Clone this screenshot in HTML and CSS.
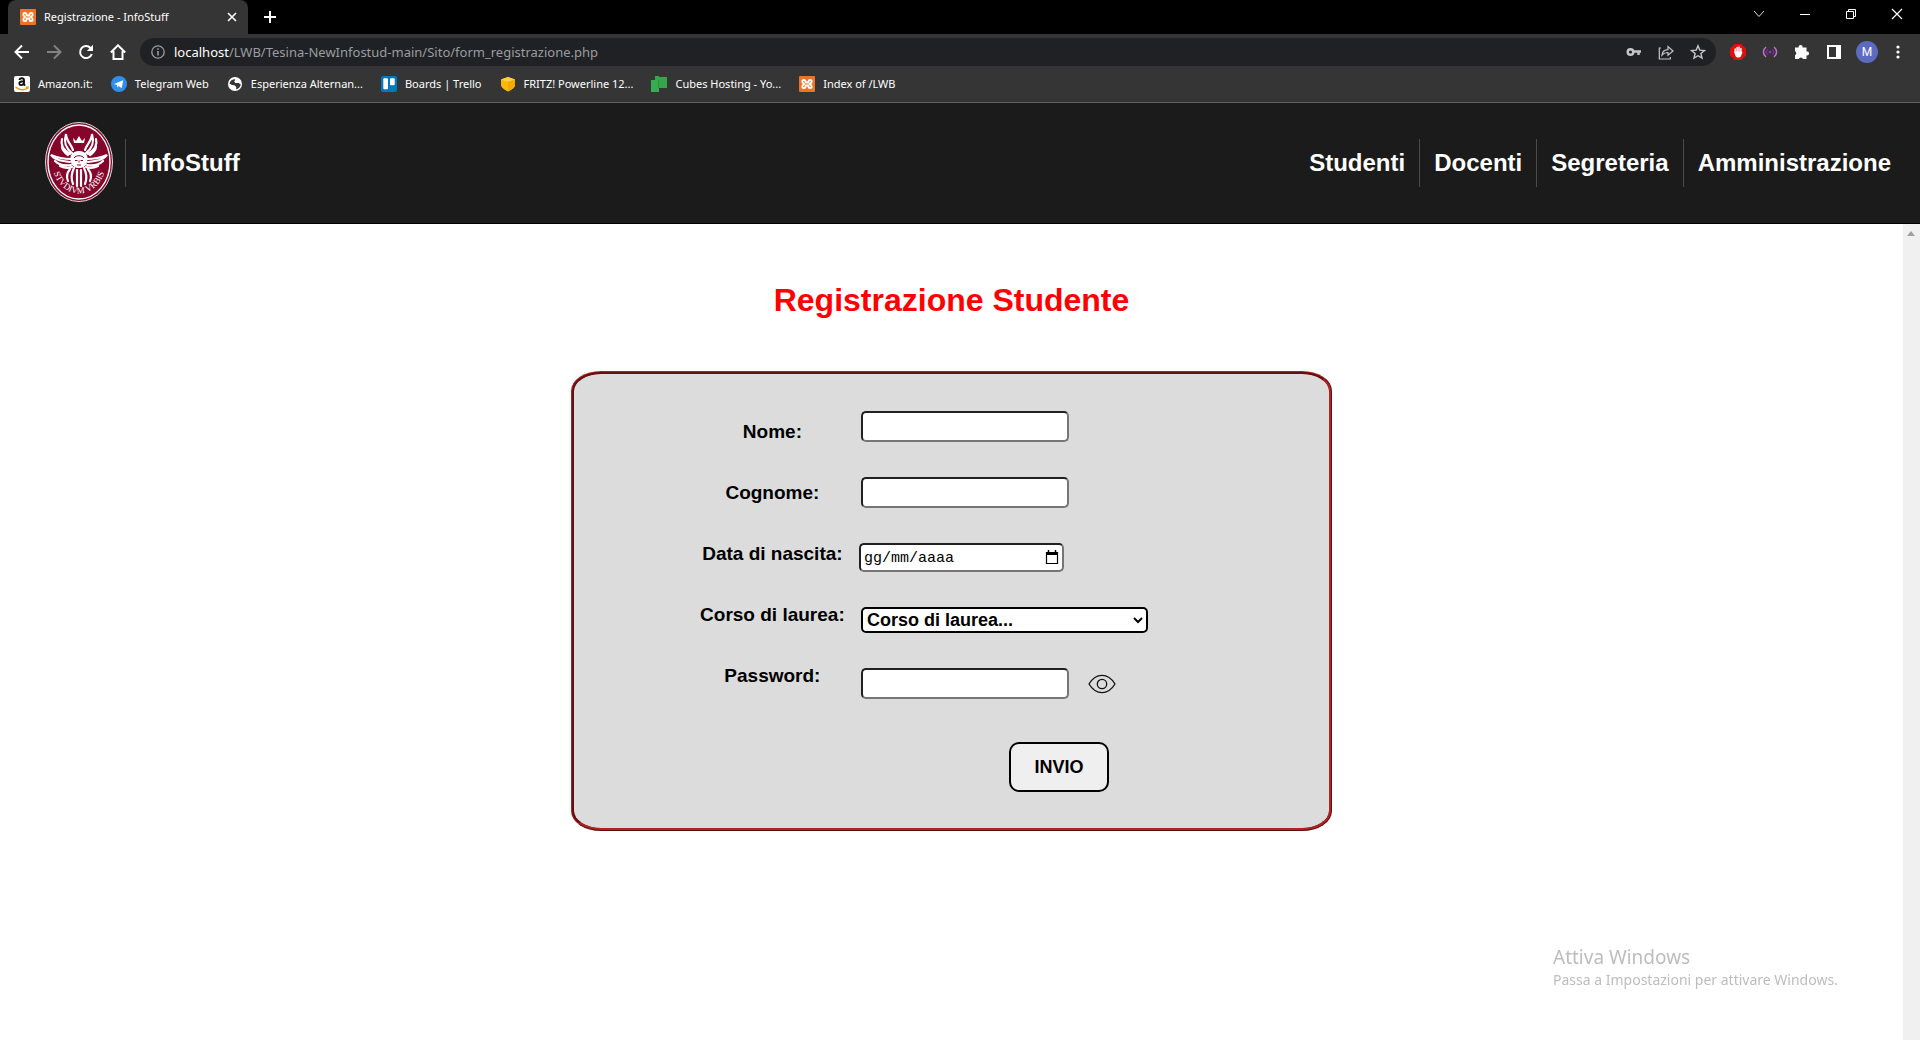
FILE: index.html
```html
<!DOCTYPE html>
<html lang="it">
<head>
<meta charset="utf-8">
<title>Registrazione - InfoStuff</title>
<link rel="stylesheet" href="styles.css">
</head>
<body>
<svg class="defs" aria-hidden="true">
  <symbol id="xampp" viewBox="0 0 16 16">
    <rect width="16" height="16" rx="1" fill="#ee7326"/>
    <path d="M6.500 7V5.500A1.600 1.600 0 0 0 3.300 5.500C3.300 7 4.500 7.300 5 8 4.500 8.700 3.300 9 3.300 10.500A1.600 1.600 0 0 0 6.500 10.500V9.500H9.500V10.500A1.600 1.600 0 0 0 12.700 10.500C12.700 9 11.500 8.700 11 8 11.500 7.300 12.700 7 12.700 5.500A1.600 1.600 0 0 0 9.500 5.500V6.500H6.500" fill="none" stroke="#fff" stroke-width="1.800"/>
  </symbol>
</svg>

<div class="browser">
  <div class="tabstrip">
    <div class="tab">
      <svg class="icon16"><use href="#xampp"/></svg>
      <span class="tab-title">Registrazione - InfoStuff</span>
      <button class="bare" aria-label="Chiudi scheda"><svg width="10" height="10" viewBox="0 0 10 10" stroke="#fff" stroke-width="1.600"><path d="M1 1l8 8M9 1L1 9"/></svg></button>
    </div>
    <button class="bare new-tab" aria-label="Nuova scheda"><svg width="12" height="12" viewBox="0 0 12 12" stroke="#fff" stroke-width="2"><path d="M6 0v12M0 6h12"/></svg></button>
    <div class="window-controls">
      <button class="bare" aria-label="Cerca schede"><svg width="12" height="12" viewBox="0 0 12 12" fill="none" stroke="#ddd"><path d="M1 3l5 5.500L11 3"/></svg></button>
      <button class="bare" aria-label="Riduci"><svg width="12" height="12" viewBox="0 0 12 12" stroke="#fff"><path d="M1 6.500h10"/></svg></button>
      <button class="bare" aria-label="Ripristina"><svg width="12" height="12" viewBox="0 0 12 12" fill="none" stroke="#fff"><path d="M1.500 3.500h7v7h-7zM3.500 3.500v-2h7v7h-2"/></svg></button>
      <button class="bare" aria-label="Chiudi"><svg width="12" height="12" viewBox="0 0 12 12" stroke="#fff" stroke-width="1.200"><path d="M1 1l10 10M11 1L1 11"/></svg></button>
    </div>
  </div>

  <div class="toolbar">
    <button class="bare" aria-label="Indietro"><svg width="16" height="16" viewBox="0 0 16 16" fill="none" stroke="#fff" stroke-width="2"><path d="M15 8H2M8 1.500L1.500 8 8 14.500"/></svg></button>
    <button class="bare" aria-label="Avanti"><svg width="16" height="16" viewBox="0 0 16 16" fill="none" stroke="#828282" stroke-width="2"><path d="M1 8h13M8 1.500L14.500 8 8 14.500"/></svg></button>
    <button class="bare" aria-label="Ricarica"><svg width="16" height="16" viewBox="0 0 16 16" fill="none" stroke="#fff" stroke-width="2"><path d="M13.800 10A6 6 0 1 1 12.500 4"/><path d="M15 .8V7H8.800z" fill="#fff" stroke="none"/></svg></button>
    <button class="bare" aria-label="Pagina iniziale"><svg width="16" height="16" viewBox="0 0 16 16" fill="none" stroke="#fff" stroke-width="2"><path d="M.8 8.500L8 1.300l7.200 7.200M3.500 7v8h9V7"/></svg></button>
    <div class="omnibox">
      <svg width="14" height="14" viewBox="0 0 14 14" fill="none" stroke="#9a9da1" stroke-width="1.300"><circle cx="7" cy="7" r="6.200"/><path d="M7 6v4.500M7 3.300v1.500" stroke-width="1.600"/></svg>
      <span class="url"><b>localhost</b>/LWB/Tesina-NewInfostud-main/Sito/form_registrazione.php</span>
      <button class="bare" aria-label="Password"><svg width="16" height="16" viewBox="0 0 16 16" fill="none" stroke="#c4c6c9" stroke-width="2.400"><circle cx="4.500" cy="8" r="2.800"/><path d="M7.500 7.500H15M12.500 7.500V11"/></svg></button>
      <button class="bare" aria-label="Condividi"><svg width="16" height="16" viewBox="0 0 16 16" fill="none" stroke="#c4c6c9" stroke-width="1.200"><path d="M3 4H1.300v11h11v-2M4 11c.5-3.500 3-5.200 6-5.300V2.500L15 7l-5 4.300V8.500C7.500 8.500 5.500 9.200 4 11z"/></svg></button>
      <button class="bare" aria-label="Preferiti"><svg width="16" height="16" viewBox="0 0 16 16" fill="none" stroke="#c4c6c9" stroke-width="1.400"><path d="M8 1.800l1.800 4.300 4.700.4-3.600 3 1.100 4.600L8 11.700l-4 2.400 1.100-4.600-3.600-3 4.700-.4z"/></svg></button>
    </div>
    <div class="extensions">
      <button class="bare" aria-label="Adblock"><svg width="16" height="16" viewBox="0 0 16 16"><path d="M4.700 0h6.600L16 4.700v6.600L11.300 16H4.700L0 11.300V4.700z" fill="#e30d0d"/><path d="M5.200 9V5M7.100 8V3.500M9 8V3M10.900 9V4.500" stroke="#fff" stroke-width="1.500" stroke-linecap="round"/><path d="M4.500 7.500h7.200l.8.800-1.700 4.200c-1 1.400-4 1.400-5 0C5 11 4.500 9 4.500 7.500z" fill="#fff"/></svg></button>
      <button class="bare" aria-label="Estensione"><svg width="16" height="16" viewBox="0 0 16 16" fill="none" stroke="#c078d8" stroke-width="1.400"><path d="M4 3C.6 5.500.6 10.500 4 13M12 3c3.400 2.500 3.400 7.500 0 10"/><path d="M5.500 5.500c-1.500 1.500-1.500 3.500 0 5M10.500 5.500c1.500 1.500 1.500 3.500 0 5" stroke="#8a1fb0"/><circle cx="8" cy="8" r="1.300" fill="#a02cc8" stroke="none"/></svg></button>
      <button class="bare" aria-label="Estensioni"><svg width="16" height="16" viewBox="0 0 16 16" fill="#fff"><path d="M1 3.500h3.700a2 2 0 1 1 3.800 0H12.500v4a2 2 0 1 1 0 3.800V15H9a2.200 2.200 0 0 0-4.200 0H1v-3.800a2.200 2.200 0 0 0 0-4z"/></svg></button>
      <button class="bare" aria-label="Pannello laterale"><svg width="16" height="16" viewBox="0 0 16 16"><path d="M1 1h14v14H1zM3 3v10h7V3z" fill="#fff" fill-rule="evenodd"/></svg></button>
      <span class="avatar">M</span>
      <button class="bare" aria-label="Menu"><svg width="12" height="16" viewBox="0 0 12 16" fill="#fff"><circle cx="6" cy="3" r="1.600"/><circle cx="6" cy="8" r="1.600"/><circle cx="6" cy="13" r="1.600"/></svg></button>
    </div>
  </div>

  <nav class="bookmarks" aria-label="Preferiti">
    <a href="#"><svg class="icon16" viewBox="0 0 16 16"><rect width="16" height="16" rx="2" fill="#fff"/><path d="M5.300 4C6 1.600 10 1.600 10 4.300V8.300l1 1.300M9.800 5.300C6.500 5.300 5.200 6 5.300 7.700c.2 2 3.600 1.900 4.500-.3" fill="none" stroke="#111" stroke-width="1.900"/><path d="M1.500 11c4 3.400 9 3.400 12 1M12 11.200l2-.2-.5 2" fill="none" stroke="#f79a1c" stroke-width="1.400"/></svg>Amazon.it:</a>
    <a href="#"><svg class="icon16" viewBox="0 0 16 16"><circle cx="8" cy="8" r="8" fill="#2f8fee"/><path d="M3 7.900l9.200-3.700-1.500 8-3-2.100-1.400 1.300-.4-2.500z" fill="#fff"/></svg>Telegram Web</a>
    <a href="#"><svg class="icon16" viewBox="0 0 16 16"><circle cx="8" cy="8" r="7" fill="#fff"/><path d="M2.500 7.500C3 4.500 6 3 8.500 3.300L7.300 5.500l1.200 1.600h3l2.200 1.200c0 2.500-2 4.700-4.700 5l.3-2L8 9.700 4.500 9z" fill="#35363a"/><path d="M8.500 3.300l4 1.500-2 2.300H8.700L7.500 5.700zM3 8.500l4.500 1 1.300 1.700-1 2C5 13 3.300 11 3 8.500z" fill="#fff"/></svg>Esperienza Alternan...</a>
    <a href="#"><svg class="icon16" viewBox="0 0 16 16"><rect width="16" height="16" rx="2" fill="#0079bf"/><rect x="2.300" y="2.300" width="4.700" height="11" rx="1" fill="#fff"/><rect x="9" y="2.300" width="4.700" height="7" rx="1" fill="#fff"/></svg>Boards | Trello</a>
    <a href="#"><svg class="icon16" viewBox="0 0 16 16"><path d="M1 3.500L8 1l7 2.500V9c0 3-4 5-7 6.500C5 14 1 12 1 9z" fill="#fbb90d"/><path d="M1 3.500L8 1l7 2.500L8 6z" fill="#ffd149"/><path d="M8 6l7-2.500V9c0 3-4 5-7 6.500z" fill="#f3ab00"/></svg>FRITZ! Powerline 12...</a>
    <a href="#"><svg class="icon16" viewBox="0 0 16 16"><path d="M4 0h4v4H4zM8 1h8v11H8z" fill="#35a64a"/><path d="M0 4h8v12H0z" fill="#38ad50"/><path d="M7 4v8h1V4z" fill="#2e9142"/></svg>Cubes Hosting - Yo...</a>
    <a href="#"><svg class="icon16"><use href="#xampp"/></svg>Index of /LWB</a>
  </nav>
</div>

<header class="site-header">
  <a class="brand" href="#">
    <svg class="crest" width="68" height="82" viewBox="0 0 68 82" aria-label="Studium Urbis">
      <ellipse cx="34" cy="40" rx="33.500" ry="39.500" fill="#86062b" stroke="#ddd"/>
      <ellipse cx="34" cy="40" rx="31" ry="37" fill="#86062b" stroke="#fff" stroke-width="1.400"/>
      <g fill="none" stroke="#fff" stroke-width="2.200" stroke-linecap="round">
        <path d="M27 31c-5-4-9-9-6-19 0 7 6 11 7 16M17 17c-2 7 3 12 8 15M17 24c0 4 3 7 6 9"/>
        <path d="M41 31c5-4 9-9 6-19 0 7-6 11-7 16M51 17c2 7-3 12-8 15M51 24c0 4-3 7-6 9"/>
        <path d="M26 37c-7 0-13-1-20-4 4 5 10 6 19 7M10 39c4 4 9 5 16 4M15 44c4 2 7 3 12 1"/>
        <path d="M42 37c7 0 13-1 20-4-4 5-10 6-19 7M58 39c-4 4-9 5-16 4M53 44c-4 2-7 3-12 1"/>
        <path d="M25 47c-3 4-4 8-2 12M29 46c-3 6-3 11-1 16M32 48v16M36 48v16M39 46c3 6 3 11 1 16M43 47c3 4 4 8 2 12"/>
      </g>
      <path d="M28 16l3 3 3-5 3 5 3-3-1 5H29z" fill="#fff"/>
      <path d="M26 40c-2-6 1-11 8-11s10 5 8 11c-1 8-15 8-16 0z" fill="#fff"/>
      <path d="M29 36c2-3 8-3 10 0M30 38.500h2.500M35.500 38.500H38M34 38.500v2M32 43h4" fill="none" stroke="#86062b"/>
      <path id="motto" d="M8.500 50A27 32 0 0 0 59.500 50" fill="none"/>
      <text class="motto"><textPath href="#motto" startOffset="50%">STVDIVM VRBIS</textPath></text>
    </svg>
    <span class="brand-name">InfoStuff</span>
  </a>
  <nav class="site-nav">
    <a href="#">Studenti</a>
    <a href="#">Docenti</a>
    <a href="#">Segreteria</a>
    <a href="#">Amministrazione</a>
  </nav>
</header>

<div class="viewport">
  <main class="page">
    <h1>Registrazione Studente</h1>
    <form class="card">
      <div class="labels">
        <label for="nome">Nome:</label>
        <label for="cognome">Cognome:</label>
        <label for="nascita">Data di nascita:</label>
        <label for="corso">Corso di laurea:</label>
        <label for="password">Password:</label>
      </div>
      <div class="fields">
        <input class="field" type="text" id="nome">
        <input class="field" type="text" id="cognome">
        <div class="date">
          <input type="text" id="nascita" placeholder="gg/mm/aaaa">
          <button class="bare" type="button" aria-label="Apri calendario"><svg width="14" height="16" viewBox="0 0 14 16"><path d="M3.500 0v3M10.500 0v3" stroke="#000" stroke-width="1.500"/><path d="M1.500 2.500h11v11h-11z" fill="none" stroke="#000" stroke-width="1.200"/><path d="M1 2h12v3H1z"/></svg></button>
        </div>
        <select id="corso"><option>Corso di laurea...</option></select>
        <div class="password">
          <input class="field" type="password" id="password">
          <button class="bare" type="button" aria-label="Mostra password"><svg width="28" height="20" viewBox="0 0 28 20" fill="none" stroke="#111" stroke-width="1.300"><path d="M1 10C8-1.500 20-1.500 27 10 20 21.500 8 21.500 1 10z"/><circle cx="14" cy="10" r="4.700"/></svg></button>
        </div>
        <button class="submit" type="submit">INVIO</button>
      </div>
    </form>
  </main>
  <div class="scrollbar"><svg width="8" height="5" viewBox="0 0 8 5"><path d="M4 0l4 5H0z" fill="#a0a0a0"/></svg></div>
</div>

<aside class="watermark">
  <p class="watermark-title">Attiva Windows</p>
  <p>Passa a Impostazioni per attivare Windows.</p>
</aside>
</body>
</html>
```
FILE: styles.css
```css
* { box-sizing: border-box; }

body {
  margin: 0;
  min-height: 100vh;
  display: flex;
  flex-direction: column;
  background: #fff;
  font-family: "Liberation Sans", Arial, sans-serif;
}

a { color: inherit; text-decoration: none; }
svg { display: block; flex: none; }
.defs { position: absolute; width: 0; height: 0; }
.icon16 { width: 16px; height: 16px; }
.bare { flex: none; padding: 0; border: 0; background: none; }

/* Browser window */
.browser {
  background: #353535;
  border-bottom: 1px solid #606060;
  color: #fff;
  font: 12px/16px "Noto Sans", sans-serif;
}
.tabstrip { display: flex; align-items: center; height: 34px; background: #000; }
.tab {
  display: flex;
  align-items: center;
  gap: 8px;
  align-self: stretch;
  width: 240px;
  margin-left: 8px;
  padding: 0 11px 0 12px;
  background: #353535;
  border-radius: 8px 8px 0 0;
}
.tab-title { flex: 1; font-size: 11px; white-space: nowrap; }
.new-tab { margin-left: 16px; }
.window-controls { display: flex; gap: 34px; margin-left: auto; padding: 0 17px 6px 0; }

.toolbar { display: flex; align-items: center; gap: 16px; height: 36px; padding: 0 16px 0 14px; }
.omnibox {
  flex: 1;
  display: flex;
  align-items: center;
  gap: 16px;
  height: 28px;
  margin-left: -2px;
  padding: 0 10px 0 11px;
  border-radius: 14px;
  background: #202124;
  color: #9a9da1;
  font-size: 13px;
}
.url { flex: 1; margin-left: -7px; white-space: nowrap; }
.url b { color: #fff; font-weight: 400; }
.extensions { display: flex; align-items: center; gap: 16px; margin-left: -2px; }
.avatar {
  width: 22px;
  height: 22px;
  margin: 0 -2px;
  border-radius: 50%;
  background: #5c6bc0;
  font: 12px/22px Roboto, sans-serif;
  text-align: center;
}
.bookmarks { display: flex; gap: 18px; height: 32px; padding: 6px 14px; font-size: 11px; }
.bookmarks a { display: flex; gap: 8px; white-space: nowrap; }

/* Site header */
.site-header {
  display: flex;
  align-items: center;
  justify-content: space-between;
  height: 121px;
  padding: 0 29px 0 45px;
  background: #1b1b1b;
  border-bottom: 1px solid #000;
  color: #fff;
  font-size: 24px;
  font-weight: 700;
  line-height: 48px;
}
.brand { display: flex; align-items: center; gap: 12px; }
.brand-name { padding-left: 15px; border-left: 1px solid #4a4a4a; }
.motto { fill: #fff; font: 9px "Liberation Serif", serif; text-anchor: middle; }
.site-nav { display: flex; }
.site-nav a { padding-left: 14px; }
.site-nav a + a { margin-left: 14px; border-left: 1px solid #4a4a4a; }

/* Registration page */
.viewport { flex: 1; display: flex; }
.page { flex: 1; padding-bottom: 40px; }
.scrollbar { width: 17px; padding: 7px 4px; background: #f0f0f0; }

h1 {
  margin: 58px 0 52px;
  color: #f00;
  font-size: 32px;
  line-height: 37px;
  text-align: center;
}
.card {
  display: flex;
  width: 40%;
  margin: 0 auto;
  padding: 37px 0 36px 126px;
  border: 3px ridge #b22222;
  border-radius: 30px / 20px;
  background: #dcdcdc;
}
.labels {
  display: flex;
  flex-direction: column;
  gap: 39px;
  width: 145px;
  padding-top: 10px;
  font-size: 19px;
  font-weight: 700;
  line-height: 22px;
  text-align: center;
}
.fields { display: flex; flex-direction: column; gap: 35px; padding-left: 16px; }
.field, .date input {
  width: 208px;
  height: 31px;
  border: 2px inset #767676;
  border-radius: 5px;
  background: #fff;
  font-size: 18px;
}
.date { display: flex; align-items: center; margin-left: -2px; }
.date input {
  width: 205px;
  height: 29px;
  padding: 2px 3px 0;
  font: 15px "Liberation Mono", monospace;
}
.date input::placeholder { color: #000; }
.date button { margin-left: -19px; }
select {
  width: 287px;
  height: 26px;
  border: 2px solid #000;
  border-radius: 5px;
  background: #fff;
  color: #000;
  font: 700 18px "Liberation Sans", Arial, sans-serif;
}
.password { display: flex; align-items: center; gap: 19px; }
.submit {
  align-self: flex-start;
  width: 100px;
  height: 50px;
  margin: 8px 0 0 148px;
  border: 2px solid #000;
  border-radius: 10px;
  background: #efefef;
  color: #000;
  font: 700 18px "Liberation Sans", Arial, sans-serif;
}

/* System notice that floats above every window */
.watermark {
  position: fixed;
  right: 81px;
  bottom: 50px;
  width: 286px;
  color: #bdbdbd;
  font: 14px/20px "Noto Sans", sans-serif;
  white-space: nowrap;
}
.watermark p { margin: 0; }
.watermark-title { font-size: 19px; line-height: 26px; }
```
